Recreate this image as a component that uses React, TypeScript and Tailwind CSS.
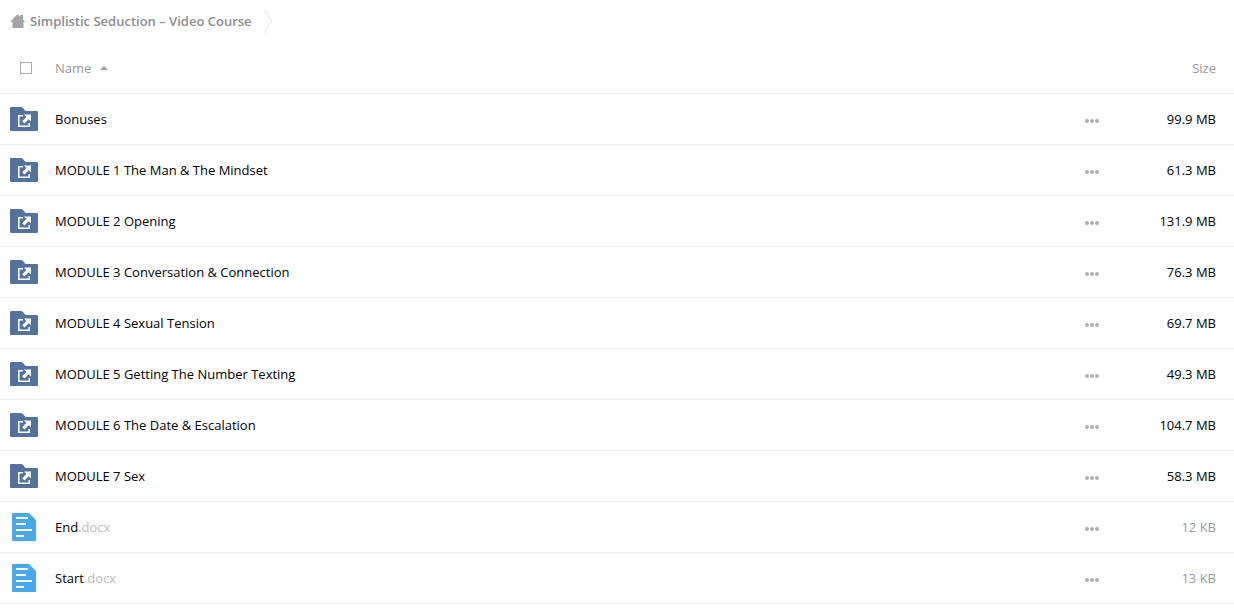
type Item = {
  name: string;
  extension?: string;
  size: string;
};

const items: Item[] = [
  { name: "Bonuses", size: "99.9 MB" },
  { name: "MODULE 1 The Man & The Mindset", size: "61.3 MB" },
  { name: "MODULE 2 Opening", size: "131.9 MB" },
  { name: "MODULE 3 Conversation & Connection", size: "76.3 MB" },
  { name: "MODULE 4 Sexual Tension", size: "69.7 MB" },
  { name: "MODULE 5 Getting The Number Texting", size: "49.3 MB" },
  { name: "MODULE 6 The Date & Escalation", size: "104.7 MB" },
  { name: "MODULE 7 Sex", size: "58.3 MB" },
  { name: "End", extension: ".docx", size: "12 KB" },
  { name: "Start", extension: ".docx", size: "13 KB" },
];

function HomeIcon() {
  return (
    <svg className="h-3.5 w-4 shrink-0" viewBox="0 0 16 14" fill="#a3a3a3" aria-hidden="true">
      <path d="M0 8 7.5 0.2 10 2.8V1h3v4.8L15.5 8H13.5v6H2.5V8Z" />
    </svg>
  );
}

function FolderIcon() {
  return (
    <svg className="block h-6 w-7" viewBox="0 0 28 24" aria-hidden="true">
      <path
        d="M0 1Q0 0 1 0H11.3Q12 0 12.5 .5L15.6 4H27Q28 4 28 5V23Q28 24 27 24H1Q0 24 0 23Z"
        fill="#54739c"
      />
      <path d="M13 8.8H8.8V19.2H19.2V16" fill="none" stroke="#fff" strokeWidth="1.5" />
      <path d="M14 7.5H21V14.5L18.7 12.2 14.4 16.5 12.2 14.3 16.4 9.9Z" fill="#fff" />
    </svg>
  );
}

function DocumentIcon() {
  return (
    <svg className="mx-0.5 block h-7 w-6" viewBox="0 0 24 28" aria-hidden="true">
      <path d="M1 0H17L24 7V27Q24 28 23 28H1Q0 28 0 27V1Q0 0 1 0Z" fill="#47a8ea" />
      <path d="M4 4H16V6H4ZM4 10H14V12H4ZM4 16H20V18H4ZM4 22H12V24H4Z" fill="#fff" />
    </svg>
  );
}

function DotsIcon() {
  return (
    <svg className="block h-1 w-3.5" viewBox="0 0 14 4" fill="#b0b0b0" aria-hidden="true">
      <circle cx="2" cy="2" r="2" />
      <circle cx="7" cy="2" r="2" />
      <circle cx="12" cy="2" r="2" />
    </svg>
  );
}

function Row({ item }: { item: Item }) {
  return (
    <tr className="h-[51px] border-b border-[#ebebeb]">
      <td className="pl-2.5">{item.extension ? <DocumentIcon /> : <FolderIcon />}</td>
      <td>
        <a href="#" className="text-black">
          {item.name}
          {item.extension && <span className="text-[#bbbbbb]">{item.extension}</span>}
        </a>
      </td>
      <td>
        <button type="button" aria-label={`Actions for ${item.name}`} className="block pt-1">
          <DotsIcon />
        </button>
      </td>
      <td className={item.extension ? "pr-[18px] text-right text-[#999999]" : "pr-[18px] text-right text-black"}>
        {item.size}
      </td>
    </tr>
  );
}

export default function App() {
  return (
    <main className="bg-white font-['Open_Sans','Noto_Sans',sans-serif] text-[13px] leading-5">
      <nav aria-label="Breadcrumb" className="flex h-[42px] items-center pl-2.5">
        <a href="#" className="flex items-center gap-1 font-semibold text-[#8c8c8c]">
          <HomeIcon />
          Simplistic Seduction – Video Course
        </a>
        <svg className="ml-3 h-6 w-2" viewBox="0 0 8 24" fill="none" stroke="#e2e2e2" aria-hidden="true">
          <path d="M.5 0 7.5 12 .5 24" />
        </svg>
      </nav>
      <table className="w-full table-fixed">
        <thead>
          <tr className="h-[51px] border-b border-[#ebebeb] text-[#999999]">
            <th className="w-[55px] pt-0.5 pl-5">
              <input
                type="checkbox"
                aria-label="Select all"
                className="block size-3 appearance-none border border-[#aaaaaa] bg-white checked:bg-[#aaaaaa]"
              />
            </th>
            <th className="pt-0.5 text-left font-normal" aria-sort="ascending">
              <button type="button" className="flex items-center gap-[9px]">
                Name
                <svg className="h-1 w-2" viewBox="0 0 8 4" fill="#a0a0a0" aria-hidden="true">
                  <path d="M0 4 4 0 8 4Z" />
                </svg>
              </button>
            </th>
            <th className="w-[49px]" aria-label="Actions" />
            <th className="w-[100px] pt-0.5 pr-[18px] text-right font-normal">Size</th>
          </tr>
        </thead>
        <tbody>
          {items.map((item) => (
            <Row key={item.name} item={item} />
          ))}
        </tbody>
      </table>
    </main>
  );
}
